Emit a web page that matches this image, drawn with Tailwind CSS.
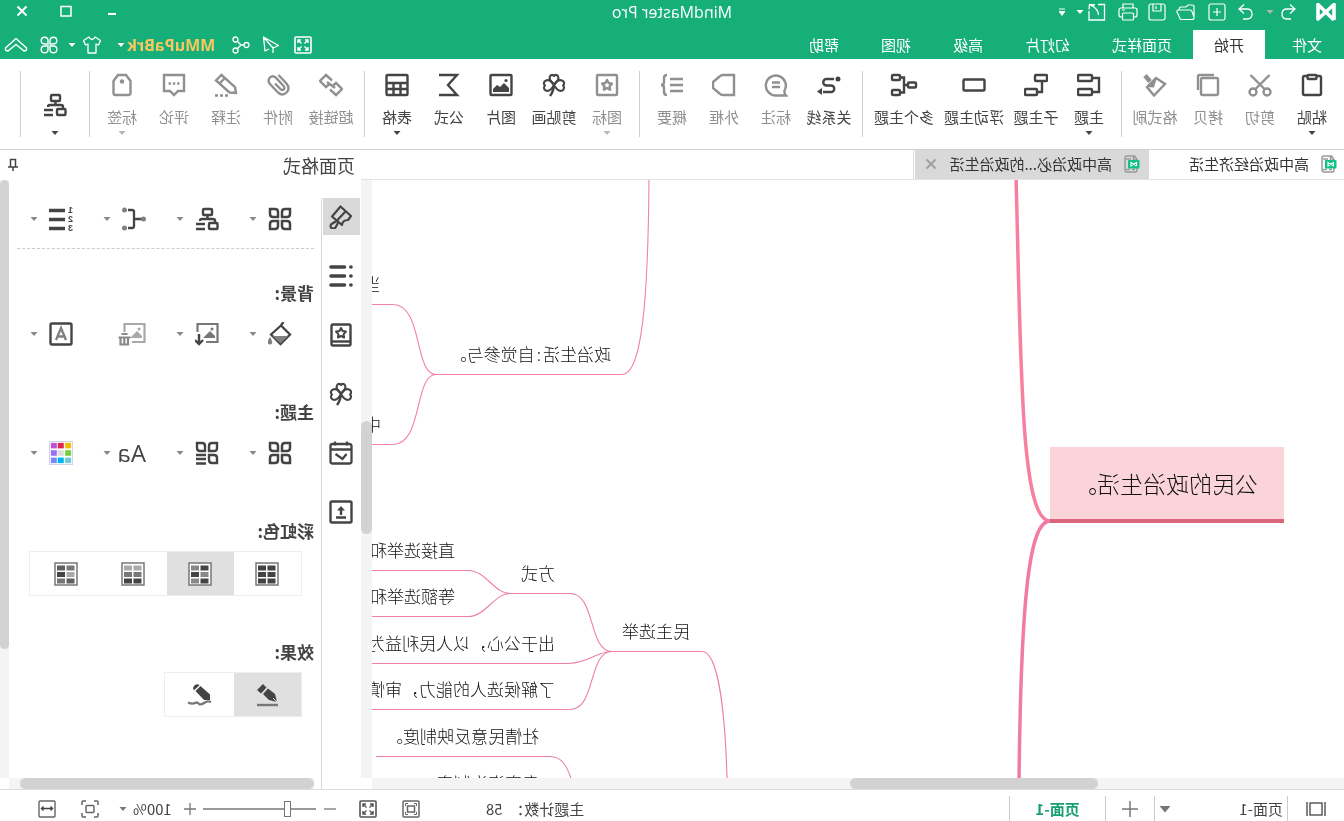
<!DOCTYPE html>
<html lang="zh-CN">
<head>
<meta charset="utf-8">
<title>MindMaster Pro</title>
<script src="https://cdn.jsdelivr.net/npm/@tailwindcss/browser@4"></script>
</head>
<body class="h-screen overflow-hidden bg-white">
<svg class="hidden" aria-hidden="true">
  <symbol id="caret" viewBox="0 0 8 4"><path d="M0.500 0h7L4 4z" fill="currentColor"/></symbol>
  <symbol id="org" viewBox="0 0 24 24"><g fill="none" stroke="currentColor" stroke-width="2.400"><rect x="7" y="2" width="9" height="6" rx="1"/><path d="M11.500 8v3M4 15v-1q0-2 2-2h11q2 0 2 2"/><rect x="1.500" y="16" width="8.500" height="6" rx="1"/><path d="M14 17h9M14 22h9"/></g></symbol>
  <symbol id="four" viewBox="0 0 24 24"><g fill="none" stroke="currentColor" stroke-width="2.500"><path d="M2 2h5q3 0 3 3v5H5q-3 0-3-3z"/><path d="M22 2h-5q-3 0-3 3v5h5q3 0 3-3z"/><path d="M2 22v-5q0-3 3-3h5v5q0 3-3 3z"/><path d="M22 22v-5q0-3-3-3h-5v5q0 3 3 3z"/></g></symbol>
  <symbol id="clover" viewBox="0 0 24 24"><g fill="none" stroke="currentColor" stroke-width="2.100" stroke-linejoin="round"><path d="M12 11.500C8.500 8.500 6.500 6 8 3.300 9.200 1.200 11.400 1.600 12 3c.6-1.400 2.800-1.800 4 .3 1.500 2.700-.5 5.200-4 8.200z"/><path d="M12 12C9.500 8 6.500 6.500 4 7.500 1.500 8.500 1.200 11 3 12.500c-1.600 1.300-1.300 4 .8 5 2.700 1.200 5.700-1 8.200-5.500z"/><path d="M12 12c2.500-4 5.500-5.500 8-4.500 2.500 1 2.800 3.500 1 5 1.600 1.300 1.300 4-.8 5-2.700 1.200-5.700-1-8.200-5.500z"/><path d="M12 11c.3 5 1.500 9 4 12" stroke-width="2.500"/></g></symbol>
  <symbol id="full" viewBox="0 0 18 18"><g fill="none" stroke="currentColor"><rect x="1" y="1" width="16" height="16" rx="1" stroke-width="1.600"/><path stroke-width="1.400" d="M4 7V4h3M4 4l3.500 3.500M11 4h3v3M14 4l-3.500 3.500M4 11v3h3M4 14l3.500-3.500M11 14h3v-3M14 14l-3.500-3.500"/></g></symbol>
  <symbol id="docicon" viewBox="0 0 18 18"><path d="M5.500 1H13q2 0 2 2v12q0 2-2 2H5q-2 0-2-2V4.500zM6.500 1v4H3" fill="none" stroke="#9a9a9a" stroke-width="1.500"/><path d="M9 4h5M5 14.500h3m2 0h4" stroke="#9a9a9a" stroke-width="1.500"/><rect x="0.500" y="5" width="11.500" height="8.500" rx="1" fill="#0fc087"/><path d="M3.500 11V7.500l5.500 3.500V7.500l-5.500 3.500" fill="none" stroke="#fff" stroke-width="1.200"/></symbol>
  <symbol id="frame" viewBox="0 0 18 18"><g fill="none" stroke="currentColor"><path stroke-width="1.500" d="M1 5V2q0-1 1-1h3M13 1h3q1 0 1 1v3M17 13v3q0 1-1 1h-3M5 17H2q-1 0-1-1v-3"/><rect x="5" y="5.500" width="8" height="7" rx="1" stroke-width="1.500"/></g></symbol>
</svg>

<!-- The interface is shown as a horizontal mirror image -->
<div class="-scale-x-100 h-full flex flex-col font-['Noto_Sans_CJK_SC','Open_Sans',sans-serif] text-[15px] leading-5 text-[#333] whitespace-nowrap">

<header class="bg-[#16ae79] text-white shrink-0">
  <div class="h-[30px] grid grid-cols-[1fr_auto_1fr] items-start">
    <div class="flex items-center h-6 pl-2">
      <svg class="w-5 h-[18px]" viewBox="0 0 20 18"><path d="M2 17V1.500L18 16V1.500L2 17" fill="none" stroke="#fff" stroke-width="3.600" stroke-linejoin="round"/></svg>
      <button aria-label="撤销" class="ml-5 w-4 h-4"><svg viewBox="0 0 16 16" fill="none" stroke="#fff" stroke-width="1.300"><path d="M6 0.500L1 5l5 4.500M1 5h8q5 0 5 5t-5 5H5"/></svg></button>
      <svg class="ml-1.5 w-2 h-1 text-[#b4b4b4]"><use href="#caret"/></svg>
      <button aria-label="重做" class="ml-3 w-4 h-4"><svg viewBox="0 0 16 16" fill="none" stroke="#fff" stroke-width="1.300"><path d="M10 0.500L15 5l-5 4.500M15 5H7q-5 0-5 5t5 5h4"/></svg></button>
      <button aria-label="新建" class="ml-3 w-[18px] h-[18px]"><svg viewBox="0 0 18 18" fill="none" stroke="#fff" stroke-width="1.200"><rect x="1" y="1" width="16" height="16" rx="2"/><path d="M9 5v8M5 9h8"/></svg></button>
      <button aria-label="打开" class="ml-3 w-5 h-[18px]"><svg viewBox="0 0 20 18" fill="none" stroke="#fff" stroke-width="1.200"><path d="M2 13V4q0-2 2-2h4l2 2h5q2 0 2 3M2 14q-.5 2.500 2 2.500h11.500L19 9q.5-2-1.500-2H6Q4.500 7 4 8.500z"/></svg></button>
      <button aria-label="保存" class="ml-2.5 w-[18px] h-[18px]"><svg viewBox="0 0 18 18" fill="none" stroke="#fff" stroke-width="1.200"><rect x="1" y="1" width="16" height="16" rx="2"/><path d="M5 1v7h8V1M10 3v3"/></svg></button>
      <button aria-label="打印" class="ml-2.5 w-5 h-[18px]"><svg viewBox="0 0 20 18" fill="none" stroke="#fff" stroke-width="1.200"><path d="M5 5V1h10v4M4 14H3q-2 0-2-2V7q0-2 2-2h14q2 0 2 2v5q0 2-2 2h-1M13 7h3"/><rect x="4.500" y="10" width="11" height="7" rx="1"/></svg></button>
      <button aria-label="导出" class="ml-3 w-[18px] h-[18px]"><svg viewBox="0 0 18 18" fill="none" stroke="#fff" stroke-width="1.300"><path d="M8 1.500H1.500V17H17V8M11 2l5.500-.5L17 6.500M16 2Q8 5 7.500 12"/></svg></button>
      <svg class="ml-1 w-2 h-1"><use href="#caret"/></svg>
      <button aria-label="自定义快速访问工具栏" class="ml-2.5 w-2 h-2"><svg viewBox="0 0 8 8"><path d="M1 1h6" stroke="#fff"/><path d="M1 3h6v1L4 8 1 4z" fill="#fff"/></svg></button>
    </div>
    <h1 class="text-[16px] font-['Open_Sans'] leading-6">MindMaster Pro</h1>
    <div class="flex items-center justify-end gap-8 pr-4 h-[22px]">
      <button aria-label="最小化" class="w-3 h-3"><svg viewBox="0 0 12 12"><path d="M2 9h8" stroke="#fff" stroke-width="2"/></svg></button>
      <button aria-label="最大化" class="ml-0.5 w-3 h-3"><svg viewBox="0 0 12 12"><path d="M1 1.500h10V11H1z" stroke="#fff" stroke-width="1.500" fill="none"/></svg></button>
      <button aria-label="关闭" class="w-3 h-3"><svg viewBox="0 0 12 12"><path d="M1.500 1.500l9 9m0-9l-9 9" stroke="#fff" stroke-width="2"/></svg></button>
    </div>
  </div>
  <div class="h-[29px] flex items-center pr-1">
    <nav class="flex flex-1 h-full pl-px *:px-[21px]">
      <button>文件</button><button class="ml-1.5 bg-white text-[#333]">开始</button><button>页面样式</button><button>幻灯片</button><button>高级</button><button>视图</button><button>帮助</button>
    </nav>
    <button aria-label="全屏" class="w-[18px] h-[18px]"><svg class="size-full"><use href="#full"/></svg></button>
    <button aria-label="发送" class="ml-3.5 w-[18px] h-[18px]"><svg viewBox="0 0 18 18" fill="none" stroke="#fff" stroke-width="1.300" stroke-linejoin="round"><path d="M16.500 1L1.500 9.500 7 12zM16.500 1L15 15l-4-2M7 12v5"/></svg></button>
    <button aria-label="分享" class="ml-3 w-[18px] h-[18px]"><svg viewBox="0 0 18 18" fill="none" stroke="#fff" stroke-width="1.300"><circle cx="3.500" cy="9" r="2.500"/><circle cx="14.500" cy="3.500" r="2.500"/><circle cx="14.500" cy="14.500" r="2.500"/><path d="M6 9h3l3.500-3.500M9 9l3.500 3.500"/></svg></button>
    <button class="ml-[17px] flex items-center gap-0.5 text-[16px] font-['Open_Sans'] font-bold text-[#f6c85f]">MMuPaBrk<svg class="w-2 h-1 text-white"><use href="#caret"/></svg></button>
    <button class="ml-[15px] flex items-center gap-1.5" aria-label="皮肤"><svg class="w-5 h-[18px]" viewBox="0 0 20 18" fill="none" stroke="#fff" stroke-width="1.300" stroke-linejoin="round"><path d="M7 1L1.500 4.500 3.500 9 6 8v9h8V8l2.500 1 2-4.500L13 1q-1 2.500-3 2.500T7 1z"/></svg><svg class="w-2 h-1"><use href="#caret"/></svg></button>
    <button class="ml-2.5 w-[18px] h-[18px]" aria-label="应用"><svg viewBox="0 0 18 18" fill="none" stroke="#fff" stroke-width="1.400"><path d="M8 8H4.500A3.400 3.400 0 1 1 8 4.500zM10 8V4.500A3.400 3.400 0 1 1 13.500 8zM8 10v3.500A3.400 3.400 0 1 1 4.500 10zM10 10h3.500a3.400 3.400 0 1 1-3.500 3.500z"/></svg></button>
    <button class="ml-3 w-6 h-4" aria-label="收起功能区"><svg viewBox="0 0 24 16" fill="none" stroke="#fff" stroke-width="1.500" stroke-linejoin="round"><path d="M12 1.500L1.500 11q-.5 3 2.500 3l8-6.500 8 6.500q3 0 2.500-3z"/></svg></button>
  </div>
</header>

<section aria-label="开始" class="shrink-0 h-[91px] border-b border-[#d0d0d0] flex text-[#444] [&>div]:flex [&>div]:px-1.5 [&>div]:mt-3 [&>div]:h-[66px] [&>div]:border-r [&>div]:border-[#d0d0d0] [&_button]:flex [&_button]:flex-col [&_button]:items-center [&_button>svg:first-child]:size-6 [&_button>svg:first-child]:mt-0.5 [&_button>svg:first-child]:mb-2.5 [&_button>svg:first-child]:[stroke-width:2.4]">
  <div>
    <button class="w-[52px]"><svg viewBox="0 0 24 24" fill="none" stroke="currentColor" stroke-width="2"><rect x="3" y="3" width="18" height="19" rx="1.500"/><rect x="7.500" y="2" width="9" height="4" rx="1" fill="#fff"/></svg>粘贴<svg class="mt-1 w-2 h-1"><use href="#caret"/></svg></button>
    <button class="w-[52px] text-[#909090]"><svg viewBox="0 0 24 24" fill="none" stroke="currentColor" stroke-width="2"><circle cx="5" cy="19" r="3.500"/><circle cx="19" cy="19" r="3.500"/><path d="M2.500 2L17 16.500M21.500 2L7 16.500"/></svg>剪切</button>
    <button class="w-[52px] text-[#909090]"><svg viewBox="0 0 24 24" fill="none" stroke="currentColor" stroke-width="2"><rect x="2" y="5" width="17" height="17" rx="1.500"/><path d="M6 2h14.500q1.500 0 1.500 1.500V17"/></svg>拷贝</button>
    <button class="w-[54px] text-[#909090]"><svg viewBox="0 0 24 24" fill="none" stroke="currentColor" stroke-width="2"><path d="M11 5L2 11l11 11.500L20 14z"/><path d="M10 4.500l11 9.500-8 .5z" fill="currentColor" stroke="none"/><path d="M22 2.500l-5 6" stroke-width="4.500"/></svg>格式刷</button>
  </div>
  <div>
    <button class="w-[52px]"><svg viewBox="0 0 24 24" fill="none" stroke="currentColor" stroke-width="2"><rect x="9" y="2" width="14" height="6" rx="1"/><rect x="9" y="16" width="14" height="6" rx="1"/><path d="M9 5H2v14h7"/></svg>主题<svg class="mt-1 w-2 h-1"><use href="#caret"/></svg></button>
    <button class="w-[54px]"><svg viewBox="0 0 24 24" fill="none" stroke="currentColor" stroke-width="2"><rect x="1" y="2" width="12" height="6" rx="1"/><rect x="11" y="16" width="12" height="6" rx="1"/><path d="M6 8v11h5"/></svg>子主题</button>
    <button class="w-[70px]"><svg viewBox="0 0 24 24" fill="none" stroke="currentColor" stroke-width="2"><rect x="1.500" y="6.500" width="21" height="11" rx="1"/></svg>浮动主题</button>
    <button class="w-[70px]"><svg class="overflow-visible" viewBox="0 0 24 24" fill="none" stroke="currentColor" stroke-width="2"><rect x="0" y="9.500" width="8" height="5" rx="1"/><rect x="16" y="2" width="8" height="5" rx="1"/><rect x="16" y="17" width="8" height="5" rx="1"/><path d="M8 12h4M16 4.500h-4v15h4"/></svg>多个主题</button>
  </div>
  <div>
    <button class="w-[54px]"><svg viewBox="0 0 24 24" fill="none" stroke="currentColor" stroke-width="2"><circle cx="3" cy="6" r="2.500" fill="currentColor" stroke="none"/><path d="M7 6h7.500a3.200 3.200 0 0 1 0 6.500H10a3.200 3.200 0 0 0 0 6.500h8"/><path d="M19 15v7l5-3.500z" fill="currentColor" stroke="none"/></svg>关系线</button>
    <button class="w-[52px] text-[#909090]"><svg viewBox="0 0 24 24" fill="none" stroke="currentColor" stroke-width="2"><path d="M2 22.500h10A10 10 0 1 0 3.500 17.500q.5 3-1.500 5zM8 9.500h8M8 14h8"/></svg>标注</button>
    <button class="w-[52px] text-[#909090]"><svg viewBox="0 0 24 24" fill="none" stroke="currentColor" stroke-width="2"><path d="M2 2h11q2 0 3.500 1.500L23 9v6l-6.500 5.500Q15 22 13 22H2z"/></svg>外框</button>
    <button class="w-[52px] text-[#909090]"><svg viewBox="0 0 24 24" fill="none" stroke="currentColor" stroke-width="2"><path d="M1 6h13M1 12h13M1 18h13M17 2q3 0 3 3v4q0 3 3 3-3 0-3 3v4q0 3-3 3"/></svg>概要</button>
  </div>
  <div>
    <button class="w-[52px] text-[#909090]"><svg viewBox="0 0 24 24" fill="none" stroke="currentColor" stroke-width="2"><rect x="2" y="2" width="20" height="20" rx="1"/><path d="M12 7l1.600 3 3.400.6-2.400 2.500.5 3.600L12 15l-3.100 1.700.5-3.600L7 10.600l3.400-.6z" stroke-linejoin="round"/></svg>图标<svg class="mt-1 w-2 h-1 text-[#b8b8b8]"><use href="#caret"/></svg></button>
    <button class="w-[54px]"><svg><use href="#clover"/></svg>剪贴画</button>
    <button class="w-[52px]"><svg viewBox="0 0 24 24" fill="none" stroke="currentColor" stroke-width="2"><rect x="1.500" y="2" width="21" height="20" rx="1"/><path d="M4 19v-4l5-5 4 4 3-2 4 4v3z" fill="currentColor" stroke="none"/><circle cx="7" cy="7.500" r="1.600" fill="currentColor" stroke="none"/></svg>图片</button>
    <button class="w-[52px]"><svg viewBox="0 0 24 24" fill="none" stroke="currentColor" stroke-width="2.400"><path d="M22 2H4l9 10-9 10h18"/></svg>公式</button>
    <button class="w-[52px]"><svg viewBox="0 0 24 24" fill="none" stroke="currentColor" stroke-width="2"><rect x="1.500" y="2" width="21" height="20" rx="1"/><path d="M1.500 10h21M1.500 16h21M8.500 10v12M15.500 10v12"/></svg>表格<svg class="mt-1 w-2 h-1"><use href="#caret"/></svg></button>
  </div>
  <div class="text-[#909090]">
    <button class="w-[54px]"><svg viewBox="0 0 24 24" fill="none" stroke="currentColor" stroke-width="2"><path d="M11 7.500l6-5.500 6 6-6 6-3.500-3M13 16.500L7 22l-6-6 6-6 3.500 3M8 15l8-6"/></svg>超链接</button>
    <button class="w-[52px]"><svg viewBox="0 0 24 24" fill="none" stroke="currentColor" stroke-width="2"><path d="M15 10.500l-5.500 5.700q-2 1.500-3.300.2t.2-3.400l8-8.500q3-2.500 5.600 0t.5 6L12 19.500q-4.500 4-8.500 0t0-9L11.500 2"/></svg>附件</button>
    <button class="w-[52px]"><svg viewBox="0 0 24 24" fill="none" stroke="currentColor" stroke-width="2"><path d="M2 20l1-6L16.500 2 22 7.500 8.500 19.500zM13 5l5.500 5.500"/><path d="M10 22.500h13" stroke-dasharray="3 2"/></svg>注释</button>
    <button class="w-[52px]"><svg viewBox="0 0 24 24" fill="none" stroke="currentColor" stroke-width="2"><path d="M2 2h20v16h-6l-4 4-4-4H2z"/><path d="M6.500 10.500h2.300m2 0h2.300m2 0h2.300" stroke-width="2.300"/></svg>评论</button>
    <button class="w-[52px]"><svg viewBox="0 0 24 24" fill="none" stroke="currentColor" stroke-width="2"><path d="M8 2h8l4.500 6v12q0 2-2 2h-13q-2 0-2-2V8z"/><circle cx="12" cy="8.500" r="2.200" fill="currentColor" stroke="none"/></svg>标签<svg class="mt-1 w-2 h-1 text-[#b8b8b8]"><use href="#caret"/></svg></button>
  </div>
  <div><button aria-label="布局" class="w-14 pt-5"><svg><use href="#org"/></svg><svg class="mt-1 w-2 h-1"><use href="#caret"/></svg></button></div>
</section>

<main class="flex-1 min-h-0 flex">
  <section class="flex-1 min-w-0 flex flex-col">
    <div role="tablist" class="h-[30px] shrink-0 flex border-b border-[#e3e3e3]">
      <button role="tab" class="w-[195px] pl-[7px] pb-0.5 flex items-center gap-2.5"><svg class="w-[18px] h-[18px]"><use href="#docicon"/></svg>高中政治经济生活</button>
      <div class="flex bg-[#d9d9d9] pl-[9px] pr-1.5 pb-0.5">
        <button role="tab" aria-selected="true" class="flex items-center gap-2.5"><svg class="w-[18px] h-[18px]"><use href="#docicon"/></svg>高中政治必...的政治生活</button>
        <button aria-label="关闭标签页" class="ml-3 w-4"><svg class="w-3 h-3" viewBox="0 0 12 12"><path d="M1.500 1.500l9 9m0-9l-9 9" stroke="#a0a0a0" stroke-width="2"/></svg></button>
      </div>
      <div class="ml-px border-l border-[#dcdcdc]"></div>
    </div>
    <div class="flex-1 min-h-0 flex">
      <div class="flex-1 min-w-0 flex flex-col">
        <!-- Mind map canvas -->
        <div class="relative flex-1 overflow-hidden text-[17px] leading-6 text-[#111] font-light [&>p]:absolute">
          <div class="absolute left-[60px] top-[267px] w-[234px] h-[76px] bg-[#fad4d8] border-b-4 border-[#d9667a] pl-[26px] pt-5 text-[23px] leading-8">公民的政治生活。</div>
          <svg class="absolute left-0 top-0 w-[972px] h-[598px]" viewBox="0 0 972 598" fill="none" stroke="#f680a0">
            <path d="M294 341C324 341 323 180 328 -4" stroke-width="3.500"/>
            <path d="M294 341C314 341 323 410 325 602" stroke="#f07ba6" stroke-width="3.500"/>
            <g stroke-width="1.100" transform="translate(0 0.500)">
              <path d="M695 -1C696 120 702 194 722 194H908C930 194 921 124 951 124H972M908 194C930 194 921 264 951 264H972"/>
              <path stroke="#ee7fa6" d="M617 598C619 530 626 471 642 471H732C756 471 748 413 774 413H834C850 413 858 390 876 390H972M834 413C850 413 858 436 876 436H972M732 471C748 471 756 483 776 483H972M732 471C756 471 748 529 774 529H972M773 598C777 586 782 576 794 576H968"/>
            </g>
          </svg>
          <p class="left-[733px] top-[162px]">政治生活<span class="px-0.5">:</span>自觉参与。</p>
          <p class="left-[963px] top-[92px]">当</p>
          <p class="left-[963px] top-[232px]">中</p>
          <p class="left-[654px] top-[439px]">民主选举</p>
          <p class="left-[789px] top-[381px]">方式</p>
          <p class="left-[889px] top-[358px]">直接选举和间接选举</p>
          <p class="left-[889px] top-[404px]">等额选举和差额选举</p>
          <p class="left-[789px] top-[451px]">出于公心，以人民利益为重</p>
          <p class="left-[789px] top-[497px]">了解候选人的能力，审慎投票</p>
          <p class="left-[805px] top-[544px]">社情民意反映制度。</p>
          <p class="left-[805px] top-[591px]">专家咨询制度。</p>
        </div>
        <div class="h-[11px] bg-[#f4f4f4] pl-[246px]"><div class="w-[248px] h-full rounded-full bg-[#d2d2d2]"></div></div>
      </div>
      <div class="w-[11px] mb-[11px] bg-[#f4f4f4] pt-[241px]"><div class="h-[113px] rounded-full bg-[#d2d2d2]"></div></div>
    </div>
  </section>

  <aside class="w-[361px] shrink-0 flex flex-col text-[#444]">
    <div class="h-[30px] shrink-0 flex items-center justify-between pl-1.5 pr-2">
      <h2 class="text-[18px] leading-7">页面格式</h2>
      <button aria-label="固定" class="w-2.5 h-3.5"><svg viewBox="0 0 10 14" fill="none" stroke="#444" stroke-width="1.500"><path d="M2.500 9V1.500h5V9M0 9h10M5 9v4"/></svg></button>
    </div>
    <div class="flex-1 min-h-0 flex">
      <nav class="mt-[18px] w-10 shrink-0 border-r border-[#d8d8d8] flex flex-col items-center gap-[22px] [&>button]:size-[37px] [&>button]:grid [&>button]:place-items-center [&_svg]:size-6">
        <button aria-label="页面格式" class="bg-[#d9d9d9]"><svg viewBox="0 0 24 24" fill="none" stroke="currentColor" stroke-width="2.200" stroke-linejoin="round"><path d="M12.500 1.500L2 11l3 4q3 0 4.500 1.500T11 20l10-8.500z"/><path d="M7.500 6.500l8.500 9M15.500 15.500l6 3.500q2 2.500 0 4t-4-.500l-3-5.500"/></svg></button>
        <button aria-label="大纲"><svg viewBox="0 0 24 24" fill="none" stroke="currentColor" stroke-width="3.600" stroke-linecap="round"><path d="M8.500 3h13.500M8.500 12h13.500M8.500 21h13.500M2 3h.2M2 12h.2M2 21h.2"/></svg></button>
        <button aria-label="图标库"><svg viewBox="0 0 24 24" fill="none" stroke="currentColor" stroke-width="2.400"><rect x="2.500" y="1.500" width="19" height="21" rx="1.500"/><path d="M2.500 18.500h19"/><path d="M12 5l1.600 3 3.400.6-2.400 2.500.5 3.400L12 13l-3.100 1.500.5-3.400L7 8.600l3.400-.6z" stroke-width="2" stroke-linejoin="round"/></svg></button>
        <button aria-label="剪贴画"><svg><use href="#clover"/></svg></button>
        <button aria-label="任务"><svg viewBox="0 0 24 24" fill="none" stroke="currentColor" stroke-width="2.300"><rect x="1.500" y="3" width="21" height="19.500" rx="2"/><path d="M1.500 8.500h21M6 0.500v4M18 0.500v4M6.500 13l4 5 7-5"/></svg></button>
        <button aria-label="附件库"><svg viewBox="0 0 24 24" fill="none" stroke="currentColor" stroke-width="2.400"><rect x="1.500" y="1.500" width="21" height="21" rx="1.500"/><path d="M7 17.500h10M12 15V8"/><path d="M8 10.500L12 6l4 4.500z" fill="currentColor" stroke="none"/></svg></button>
      </nav>
      <div class="flex-1 min-w-0 flex flex-col">
        <div class="flex-1 pl-[7px] pr-2 [&_h3]:text-[17px] [&_h3]:leading-6 [&_h3]:font-bold">
          <div class="h-[69px] pl-[22px] pt-[27px] border-b border-dashed border-[#ccc] grid grid-cols-[repeat(4,73px)] [&>button]:flex [&>button]:items-center [&>button]:gap-[11px] [&>button]:h-6">
            <button aria-label="布局"><svg class="size-6"><use href="#four"/></svg><svg class="w-2 h-1 text-[#888]"><use href="#caret"/></svg></button>
            <button aria-label="结构"><svg class="size-6"><use href="#org"/></svg><svg class="w-2 h-1 text-[#888]"><use href="#caret"/></svg></button>
            <button aria-label="连接线"><svg class="w-6 h-6" viewBox="0 0 24 24" fill="none" stroke="currentColor" stroke-width="2.300"><path d="M4 12h8M18 3h-4q-2 0-2 2v14q0 2 2 2h4"/><g fill="#808080" stroke="none"><circle cx="2.500" cy="12" r="2.500"/><circle cx="21.500" cy="3" r="2.500"/><circle cx="21.500" cy="21" r="2.500"/></g></svg><svg class="w-2 h-1 text-[#888]"><use href="#caret"/></svg></button>
            <button aria-label="编号"><svg class="w-6 h-6 overflow-visible" viewBox="0 0 24 24" fill="none" stroke="currentColor" stroke-width="3.600"><path d="M8 3.500h16M8 12.500h16M8 21.500h16"/><g fill="currentColor" stroke="none" font-size="9" font-weight="bold" font-family="Liberation Sans"><text x="0" y="6">1</text><text x="0" y="15">2</text><text x="0" y="24">3</text></g></svg><svg class="w-2 h-1 text-[#888]"><use href="#caret"/></svg></button>
          </div>
          <h3 class="mt-8">背景:</h3>
          <div class="mt-[17px] pl-[22px] grid grid-cols-[repeat(4,73px)] [&>button]:flex [&>button]:items-center [&>button]:gap-[11px] [&>button]:h-6">
            <button aria-label="背景颜色"><svg class="w-6 h-6" viewBox="0 0 24 24" fill="none" stroke="currentColor" stroke-width="2.300"><path d="M8.500 0l3 4M11 3.500L2 12.500l9.500 9.500 9.500-9.500z"/><path d="M4 14h15.500l-8 7.500z" fill="#808080" stroke="none"/><path d="M22 15q5 7 0 7.500-4.500-.5 0-7.500z" fill="#808080" stroke="none"/></svg><svg class="w-2 h-1 text-[#888]"><use href="#caret"/></svg></button>
            <button aria-label="背景图片"><svg class="w-6 h-6" viewBox="0 0 24 24" fill="none" stroke="#777" stroke-width="2.200"><path d="M13 20H1.500V2h20v8"/><path d="M4 16v-2l5-5 7 7z" fill="#777" stroke="none"/><circle cx="7" cy="7" r="1.500" fill="#777" stroke="none"/><path d="M20 12v10M16 18l4 4 4-4" stroke="#444" stroke-width="2.400"/></svg><svg class="w-2 h-1 text-[#888]"><use href="#caret"/></svg></button>
            <button aria-label="删除背景图片"><svg class="w-7 h-6" viewBox="0 0 28 24" fill="none" stroke="#a8a8a8" stroke-width="2.200"><path d="M14 20H1.500V2h20v8"/><path d="M4 16v-2l5-5 7 7z" fill="#a8a8a8" stroke="none"/><circle cx="7" cy="7" r="1.500" fill="#a8a8a8" stroke="none"/><path d="M15.500 15.500h12M18.500 12h6M18 16v6.500h7.500V16M21.700 16v6" stroke="#8a8a8a"/></svg></button>
            <button aria-label="水印"><svg class="w-6 h-6" viewBox="0 0 24 24" fill="none" stroke="currentColor" stroke-width="2.400"><rect x="1.500" y="1.500" width="21" height="21" rx="1.500"/><path d="M7 18l5-12 5 12M9 14.500h6" stroke="#808080"/></svg><svg class="w-2 h-1 text-[#888]"><use href="#caret"/></svg></button>
          </div>
          <h3 class="mt-[54px]">主题:</h3>
          <div class="mt-[17px] pl-[22px] grid grid-cols-[repeat(4,73px)] [&>button]:flex [&>button]:items-center [&>button]:gap-[11px] [&>button]:h-6">
            <button aria-label="主题"><svg class="w-6 h-6"><use href="#four"/></svg><svg class="w-2 h-1 text-[#888]"><use href="#caret"/></svg></button>
            <button aria-label="主题样式"><svg class="w-6 h-6" viewBox="0 0 24 24" fill="none" stroke="currentColor" stroke-width="2.400"><path d="M2 2h5q3 0 3 3v5H5q-3 0-3-3zM22 2h-5q-3 0-3 3v5h5q3 0 3-3zM2 22v-5q0-3 3-3h5v5q0 3-3 3zM13 14h10M13 18h10M13 22.500h10"/></svg><svg class="w-2 h-1 text-[#888]"><use href="#caret"/></svg></button>
            <button aria-label="主题字体"><span class="w-6 text-[24px] leading-6 font-['Open_Sans'] font-medium">Aa</span><svg class="w-2 h-1 text-[#888]"><use href="#caret"/></svg></button>
            <button aria-label="主题颜色"><svg class="w-6 h-6" viewBox="0 0 26 26"><rect x="0.500" y="0.500" width="25" height="25" fill="#fff" stroke="#ccd2e6"/><path fill="#f0c000" d="M2 2h6.500v6H2z"/><path fill="#dc2850" d="M10 2h6.500v6H10z"/><path fill="#c050d0" d="M17.500 2H24v6h-6.500z"/><path fill="#78cc3c" d="M2 10h6.500v6H2z"/><path fill="#dcdcdc" d="M10 10h6.500v6H10z"/><path fill="#9670f0" d="M17.500 10H24v6h-6.500z"/><path fill="#6cccd8" d="M2 18h6.500v6H2z"/><path fill="#00b4f0" d="M10 18h6.500v6H10z"/><path fill="#7888ff" d="M17.500 18H24v6h-6.500z"/></svg><svg class="w-2 h-1 text-[#888]"><use href="#caret"/></svg></button>
          </div>
          <h3 class="mt-[54px]">彩虹色:</h3>
          <div class="mt-2 ml-3 mr-3 h-[45px] border border-[#eee] grid grid-cols-[repeat(4,67px)] [&>button]:grid [&>button]:place-items-center [&_svg]:size-6">
            <button aria-label="彩虹色 1"><svg viewBox="0 0 24 24"><rect x="1" y="1" width="22" height="22" fill="#fff" stroke="#777" stroke-width="1.500"/><path fill="#444" d="M3.500 3.500h8v5h-8zM13 3.500h8v5h-8zM3.500 10h8v5h-8zM13 10h8v5h-8zM3.500 16.500h8v5h-8zM13 16.500h8v5h-8z"/></svg></button>
            <button aria-label="彩虹色 2" class="bg-[#e0e0e0]"><svg viewBox="0 0 24 24"><rect x="1" y="1" width="22" height="22" fill="#fff" stroke="#777" stroke-width="1.500"/><path fill="#444" d="M3.500 3.500h8v5h-8zM13 10h8v5h-8zM3.500 16.500h8v5h-8z"/><path fill="#888" d="M13 3.500h8v5h-8zM3.500 10h8v5h-8zM13 16.500h8v5h-8z"/></svg></button>
            <button aria-label="彩虹色 3"><svg viewBox="0 0 24 24"><rect x="1" y="1" width="22" height="22" fill="#fff" stroke="#777" stroke-width="1.500"/><path fill="#aaa" d="M3.500 3.500h8v5h-8zM13 3.500h8v5h-8z"/><path fill="#777" d="M3.500 10h8v5h-8zM13 10h8v5h-8z"/><path fill="#444" d="M3.500 16.500h8v5h-8zM13 16.500h8v5h-8z"/></svg></button>
            <button aria-label="彩虹色 4"><svg viewBox="0 0 24 24"><rect x="1" y="1" width="22" height="22" fill="#fff" stroke="#777" stroke-width="1.500"/><path fill="#777" d="M3.500 3.500h8v5h-8zM13 16.500h8v5h-8z"/><path fill="#606060" d="M13 3.500h8v5h-8zM3.500 16.500h8v5h-8z"/><path fill="#aaa" d="M3.500 10h8v5h-8z"/><path fill="#444" d="M13 10h8v5h-8z"/></svg></button>
          </div>
          <h3 class="mt-11">效果:</h3>
          <div class="mt-2 ml-3 w-[138px] h-[45px] border border-[#eee] grid grid-cols-[67px_1fr] [&>button]:grid [&>button]:place-items-center [&_svg]:w-[25px] [&_svg]:h-6">
            <button aria-label="常规" class="bg-[#e0e0e0]"><svg viewBox="0 0 25 24"><path d="M3 19l2-8 7-5.500 5 5.500-6 6zM13.500 4.500L17 1l6 6-4 3.500z" fill="#444"/><path d="M3 19l4-4" stroke="#e0e0e0"/><path d="M2 22h21" stroke="#777" stroke-width="2.400"/></svg></button>
            <button aria-label="手绘"><svg viewBox="0 0 25 24"><path d="M2 17v-5.500L11.500 3l5 5L8 17zM12.500 2.200q2.500-2.200 5 .3t.5 4.700z" fill="#444"/><path d="M1 19q3-1.500 6 .5t5.500 2q2-3 4.500-1.500t7-.5" fill="none" stroke="#777" stroke-width="2.200"/></svg></button>
          </div>
        </div>
        <div class="ml-[7px] h-[11px] shrink-0 bg-[#f4f4f4] pr-[11px]"><div class="h-full rounded-full bg-[#d2d2d2]"></div></div>
      </div>
      <div class="w-[9px] mb-[11px] shrink-0 bg-[#f4f4f4]"><div class="h-[469px] rounded-full bg-[#d2d2d2]"></div></div>
    </div>
  </aside>
</main>

<footer class="h-8 shrink-0 border-t border-[#dcdcdc] flex items-center text-[#444] pt-1.5">
  <button aria-label="页面视图" class="ml-[18px] w-5 h-[14px]"><svg viewBox="0 0 20 14" fill="none" stroke="#444" stroke-width="1.300"><rect x="4" y="1" width="12" height="12"/><path d="M1 0v14M19 0v14"/></svg></button>
  <label class="ml-[18px] h-full w-[134px] flex border-x border-[#ccc] relative items-center">
    <select aria-label="页面" class="appearance-none w-full h-full pl-1 bg-transparent outline-none"><option>页面-1</option></select>
    <svg class="absolute right-1 w-3 h-2 text-[#777]" viewBox="0 0 12 8"><path d="M0.500 1h11L6 7.500z" fill="currentColor"/></svg>
  </label>
  <button aria-label="添加页面" class="w-[49px] h-full border-r border-[#ccc] grid place-items-center"><svg class="w-4 h-4" viewBox="0 0 16 16"><path d="M8 0v16M0 8h16" stroke="#777" stroke-width="1.500"/></svg></button>
  <button class="w-24 h-full border-r border-[#ccc] font-bold text-[#1a9f70]">页面-1</button>
  <div class="flex-1"></div>
  <span class="mr-[66px]">主题计数：&nbsp; 58</span>
  <button aria-label="适合页面" class="w-[18px] h-[18px]"><svg viewBox="0 0 18 18" fill="none" stroke="#666"><rect x="1" y="1" width="16" height="16" rx="1" stroke-width="1.500"/><path d="M3.500 6V3.500H6M12 3.500h2.500V6M14.500 12v2.500H12M6 14.500H3.500V12"/><rect x="5.500" y="6" width="7" height="6" stroke-width="1.500"/></svg></button>
  <button aria-label="全屏显示" class="ml-[25px] w-[18px] h-[18px] text-[#555]"><svg class="size-full"><use href="#full"/></svg></button>
  <button aria-label="缩小" class="ml-[23px] w-3 h-3"><svg viewBox="0 0 12 12"><path d="M0 6h12" stroke="#777" stroke-width="1.300"/></svg></button>
  <input type="range" aria-label="缩放" min="0" max="100" value="23" class="ml-2 w-[113px] h-4 appearance-none bg-transparent [&::-webkit-slider-runnable-track]:h-0.5 [&::-webkit-slider-runnable-track]:bg-[#999] [&::-webkit-slider-thumb]:appearance-none [&::-webkit-slider-thumb]:-mt-[7px] [&::-webkit-slider-thumb]:w-[7px] [&::-webkit-slider-thumb]:h-4 [&::-webkit-slider-thumb]:bg-white [&::-webkit-slider-thumb]:border [&::-webkit-slider-thumb]:border-[#777]">
  <button aria-label="放大" class="ml-[7px] w-3 h-3"><svg viewBox="0 0 12 12"><path d="M6 0v12M0 6h12" stroke="#777" stroke-width="1.300"/></svg></button>
  <button class="ml-3 flex items-center gap-1.5">100%<svg class="w-2 h-1 text-[#777]"><use href="#caret"/></svg></button>
  <button aria-label="适合窗口" class="ml-5 w-[18px] h-[18px] text-[#666]"><svg class="size-full"><use href="#frame"/></svg></button>
  <button aria-label="适合宽度" class="ml-[25px] mr-[38px] w-[18px] h-[18px]"><svg viewBox="0 0 18 18" fill="none" stroke="#666" stroke-width="1.400"><rect x="1" y="1" width="16" height="16" rx="1"/><path d="M4 8.500h10M5.500 6.500l-2 2 2 2M12.500 6.500l2 2-2 2" stroke="#444"/></svg></button>
</footer>
</div>
</body>
</html>
